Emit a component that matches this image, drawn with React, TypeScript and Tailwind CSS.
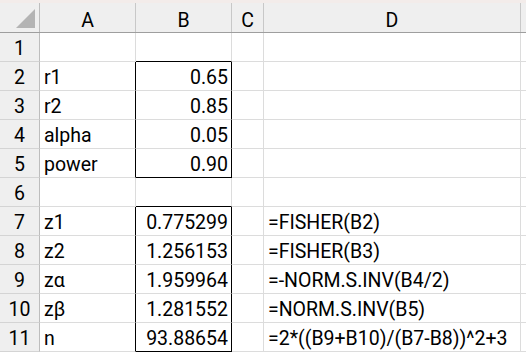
const cols = ["A", "B", "C", "D"];

const rows: [string, string, string, string][] = [
  ["1", "", "", ""],
  ["2", "r1", "0.65", ""],
  ["3", "r2", "0.85", ""],
  ["4", "alpha", "0.05", ""],
  ["5", "power", "0.90", ""],
  ["6", "", "", ""],
  ["7", "z1", "0.775299", "=FISHER(B2)"],
  ["8", "z2", "1.256153", "=FISHER(B3)"],
  ["9", "zα", "1.959964", "=-NORM.S.INV(B4/2)"],
  ["10", "zβ", "1.281552", "=NORM.S.INV(B5)"],
  ["11", "n", "93.88654", "=2*((B9+B10)/(B7-B8))^2+3"],
];

// rows inside the two outlined ranges B2:B5 and B7:B11
const boxed = ["2", "3", "4", "5", "7", "8", "9", "10", "11"];
const boxEdge = ["1", "5", "6", "11"];

export default function App() {
  return (
    <div
      className="w-[526px] h-[354px] overflow-hidden bg-white text-[19.5px] text-black"
      style={{ fontFamily: 'Roboto, "Liberation Sans", Arial, sans-serif' }}
    >
      <div className="h-[3px] bg-[#f3ecea]" />
      <div className="flex h-[30px] bg-[#efefef] border-b border-[#9e9e9e]">
        <div className="relative w-[40px] border-r border-[#bdbdbd]">
          <svg className="absolute left-0 top-0" width="39" height="29" viewBox="0 0 39 29">
            <polygon points="35,6 35,25 16,25" fill="#b4b4b4" />
          </svg>
        </div>
        {cols.map((c) => (
          <div
            key={c}
            className={
              "flex items-end justify-center pb-[2px] leading-[19px] border-r border-[#c8c8c8] " +
              (c === "A" ? "w-[96px]" : c === "B" ? "w-[96px]" : c === "C" ? "w-[32px]" : "w-[257px]")
            }
          >
            {c}
          </div>
        ))}
        <div className="flex-1" />
      </div>
      {rows.map(([n, a, b, d]) => {
        const inBox = boxed.includes(n);
        return (
          <div key={n} className="flex h-[29px]">
            <div className="w-[40px] flex items-end justify-center pb-[3px] leading-[19px] bg-[#efefef] border-r border-b border-r-[#bdbdbd] border-b-[#d4d4d4]">
              {n}
            </div>
            <div
              className={
                "w-[96px] flex items-end pl-[4px] pb-[3px] leading-[19px] border-r border-b border-b-[#dcdcdc] " +
                (inBox ? "border-r-black" : "border-r-[#dcdcdc]")
              }
            >
              {a}
            </div>
            <div
              className={
                "w-[96px] flex items-end justify-end pr-[3px] pb-[3px] leading-[19px] border-r border-b " +
                (inBox ? "border-r-black " : "border-r-[#dcdcdc] ") +
                (boxEdge.includes(n) ? "border-b-black" : "border-b-[#dcdcdc]")
              }
            >
              {b}
            </div>
            <div className="w-[32px] border-r border-b border-[#dcdcdc]" />
            <div className="w-[257px] flex items-end pl-[4px] pb-[3px] leading-[19px] whitespace-nowrap border-r border-b border-[#dcdcdc]">
              {d}
            </div>
            <div className="flex-1 border-b border-[#dcdcdc]" />
          </div>
        );
      })}
    </div>
  );
}
